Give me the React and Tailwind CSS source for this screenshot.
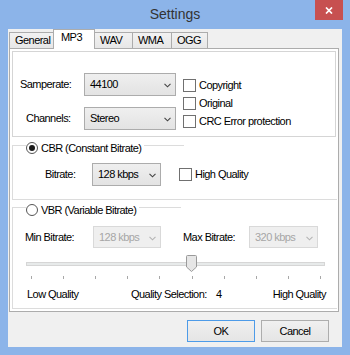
import React from "react";

function Chevron({ color }) {
  return (
    <svg width="7" height="5" viewBox="0 0 7 5" className="block">
      <path d="M0.5 0.8 L3.5 3.8 L6.5 0.8" fill="none" stroke={color} strokeWidth="1.1" />
    </svg>
  );
}

function Combo({ className, text, disabled }) {
  return (
    <div
      className={
        "flex items-center justify-between border pl-[5px] pr-[4px] " +
        (disabled
          ? "border-[#d9d9d9] bg-[#efefef] text-[#a6a6a6] "
          : "border-[#acacac] bg-linear-to-b from-[#efefef] to-[#e3e3e3] text-black ") +
        className
      }
    >
      <span>{text}</span>
      <span className="mt-[2px]">
        <Chevron color={disabled ? "#b4b4b4" : "#444444"} />
      </span>
    </div>
  );
}

function Check({ label }) {
  return (
    <div className="flex h-[18px] items-center">
      <div className="h-[13px] w-[13px] border border-[#707070] bg-white" />
      <span className="ml-[3px]">{label}</span>
    </div>
  );
}

function Radio({ checked }) {
  return (
    <div className="flex h-[12px] w-[12px] items-center justify-center rounded-full border border-[#555555] bg-white">
      {checked && <div className="h-[6px] w-[6px] rounded-full bg-[#1b1b1b]" />}
    </div>
  );
}

function GroupHeader({ checked, label, tail }) {
  return (
    <div className="flex h-[16px]">
      <div className="mt-[5px] h-[11px] w-[14px] border-l border-t border-[#dcdcdc]" />
      <div className="flex items-center">
        <Radio checked={checked} />
        <span className="ml-[3px]">{label}</span>
      </div>
      <div className={"ml-[3px] mt-[5px] h-px bg-[#dcdcdc] " + tail} />
    </div>
  );
}

export default function App() {
  const ticks = [0, 1, 2, 3, 4, 5, 6, 7, 8, 9];
  return (
    <div className="flex h-[355px] w-[350px] flex-col bg-[#8cb4e9] font-['Liberation_Sans',Arial,sans-serif] text-[11px] leading-[13px] tracking-[-0.55px] text-black">
      {/* title bar */}
      <div className="relative h-[29px]">
        <div className="pt-[6px] text-center text-[14px] leading-[16px] tracking-normal text-[#333333]">
          Settings
        </div>
        <div className="absolute right-[7px] top-0 flex h-[20px] w-[28px] items-center justify-center bg-[#c75050]">
          <svg width="8" height="7" viewBox="0 0 8 7">
            <path d="M1 0.5 L7 6.5 M7 0.5 L1 6.5" stroke="#ffffff" strokeWidth="1.7" />
          </svg>
        </div>
      </div>

      {/* client */}
      <div className="mx-[8px] flex h-[318px] flex-col bg-[#f0f0f0]">
        {/* tabs */}
        <div className="-mb-px flex h-[20px] items-end pl-[1px]">
          <div className="flex h-[17px] w-[44px] items-center border-l border-t border-[#acacac] bg-linear-to-b from-[#f2f2f2] to-[#e6e6e6] pb-[1px] pl-[5px]">
            General
          </div>
          <div className="relative z-10 h-[20px] w-[42px] border-l border-r border-t border-[#acacac] bg-white pl-[7px] pt-[1px]">
            MP3
          </div>
          <div className="flex h-[17px] w-[38px] items-center border-r border-t border-[#acacac] bg-linear-to-b from-[#f2f2f2] to-[#e6e6e6] pb-[1px] pl-[5px]">
            WAV
          </div>
          <div className="flex h-[17px] w-[39px] items-center border-r border-t border-[#acacac] bg-linear-to-b from-[#f2f2f2] to-[#e6e6e6] pb-[1px] pl-[5px]">
            WMA
          </div>
          <div className="flex h-[17px] w-[36px] items-center border-r border-t border-[#acacac] bg-linear-to-b from-[#f2f2f2] to-[#e6e6e6] pb-[1px] pl-[5px]">
            OGG
          </div>
        </div>

        {/* panel */}
        <div className="ml-[1px] flex h-[264px] w-[330px] flex-col border border-[#acacac] bg-white pb-[2px] pl-[2px] pr-[1px]">
          {/* first box */}
          <div className="mt-[2px] flex h-[86px] w-[324px] border border-[#d5d5d5] pl-[7px] pt-[21px]">
            <div className="flex flex-col">
              <div className="flex h-[23px] items-center">
                <span className="w-[64px]">Samperate:</span>
                <Combo className="h-[23px] w-[92px]" text="44100" />
              </div>
              <div className="mt-[11px] flex h-[23px] items-center">
                <span className="w-[64px] pl-[6px]">Channels:</span>
                <Combo className="h-[23px] w-[92px]" text="Stereo" />
              </div>
            </div>
            <div className="ml-[7px] mt-[3px] flex flex-col">
              <Check label="Copyright" />
              <Check label="Original" />
              <Check label="CRC Error protection" />
            </div>
          </div>

          {/* CBR group */}
          <div className="mt-[3px] flex flex-col">
            <GroupHeader checked label="CBR (Constant Bitrate)" tail="w-[40px]" />
            <div className="flex border-b border-l border-[#dcdcdc] pb-[13px] pl-[32px] pt-[7px]">
              <div className="flex h-[23px] items-center">
                <span className="w-[47px]">Bitrate:</span>
                <Combo className="h-[23px] w-[69px]" text="128 kbps" />
                <div className="ml-[18px]">
                  <Check label="High Quality" />
                </div>
              </div>
            </div>
          </div>

          {/* VBR group */}
          <div className="mt-[2px] flex flex-1 flex-col">
            <GroupHeader label="VBR (Variable Bitrate)" tail="w-[42px]" />
            <div className="flex flex-1 flex-col border-b border-l border-[#dcdcdc] pt-[8px]">
              <div className="flex h-[22px] items-center pl-[12px]">
                <span className="w-[68px]">Min Bitrate:</span>
                <Combo className="h-[22px] w-[68px]" text="128 kbps" disabled />
                <span className="ml-[22px] w-[66px]">Max Bitrate:</span>
                <Combo className="h-[22px] w-[69px]" text="320 kbps" disabled />
              </div>

              {/* slider */}
              <div className="relative ml-[13px] mt-[7px] h-[17px] w-[299px]">
                <div className="mt-[7px] h-[4px] w-full border border-[#d6d6d6] bg-[#e7eaea]" />
                <svg
                  className="absolute left-[160px] top-0"
                  width="11"
                  height="17"
                  viewBox="0 0 11 17"
                >
                  <path
                    d="M0.5 1.5 Q0.5 0.5 1.5 0.5 H9.5 Q10.5 0.5 10.5 1.5 V12 L5.5 16.5 L0.5 12 Z"
                    fill="#e6e6e6"
                    stroke="#9a9a9a"
                  />
                </svg>
              </div>
              <div className="ml-[18px] mt-[4px] flex w-[290px] justify-between">
                {ticks.map((t) => (
                  <div key={t} className="h-[3px] w-px bg-[#a8a8a8]" />
                ))}
              </div>

              <div className="mt-[9px] flex pl-[14px] pr-[11px]">
                <span className="w-[104px]">Low Quality</span>
                <span className="w-[85px]">Quality Selection:</span>
                <span>4</span>
                <span className="ml-auto">High Quality</span>
              </div>
            </div>
          </div>
        </div>

        {/* buttons */}
        <div className="mt-[8px] flex justify-end gap-[6px] pr-[13px]">
          <div className="flex h-[22px] w-[68px] items-center justify-center border border-[#4d9be8] bg-linear-to-b from-[#f0f0f0] to-[#e5e5e5]">
            OK
          </div>
          <div className="flex h-[22px] w-[68px] items-center justify-center border border-[#adadad] bg-linear-to-b from-[#f0f0f0] to-[#e5e5e5]">
            Cancel
          </div>
        </div>
      </div>
    </div>
  );
}
